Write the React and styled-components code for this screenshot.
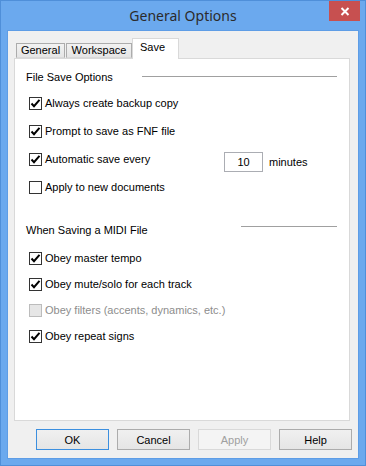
import React from "react";
import styled, { createGlobalStyle } from "styled-components";

const Global = createGlobalStyle`
  html, body { margin: 0; padding: 0; background: #6ba9ee; }
  * { box-sizing: border-box; }
`;

const Window = styled.div`
  width: 366px;
  height: 466px;
  background: #6ba9ee;
  border: 1px solid #4f8fd9;
  display: flex;
  flex-direction: column;
  font-family: "Liberation Sans", Arial, sans-serif;
  font-size: 11px;
  color: #000;
`;

const TitleBar = styled.div`
  height: 30px;
  display: grid;
  grid-template-columns: 1fr auto 1fr;
  align-items: start;
`;

const Title = styled.div`
  grid-column: 2;
  font-family: "Noto Sans", "Open Sans", sans-serif;
  font-size: 14px;
  line-height: 29px;
  color: #2b2b2b;
`;

const CloseButton = styled.div`
  grid-column: 3;
  justify-self: end;
  margin-right: 5px;
  width: 31px;
  height: 20px;
  background: #c75050;
  display: flex;
  align-items: center;
  justify-content: center;
`;

const Client = styled.div`
  flex: 1;
  margin: 0 7px 7px 7px;
  background: #f0f0f0;
  box-shadow: 0 0 0 1px #5e9de6;
  display: flex;
  flex-direction: column;
  padding: 7px 8px 8px 6px;
`;

const TabStrip = styled.div`
  height: 20px;
  display: flex;
  align-items: flex-end;
  padding-left: 2px;
  position: relative;
  z-index: 1;
`;

const Tab = styled.div`
  height: ${(p) => (p.$active ? "21px" : "15px")};
  margin: ${(p) => (p.$active ? "0 -2px -1px -1px" : "0 1px 0 0")};
  padding: ${(p) => (p.$active ? "0 8px 4px 7px" : "0 5px")};
  width: ${(p) => p.$w}px;
  border: 1px solid ${(p) => (p.$active ? "#d9d9d9" : "#acacac")};
  border-bottom: ${(p) => (p.$active ? "none" : "1px solid #d9d9d9")};
  background: ${(p) => (p.$active ? "#fff" : "linear-gradient(#f2f2f2, #e5e5e5)")};
  display: flex;
  align-items: center;
  justify-content: ${(p) => (p.$active ? "flex-start" : "center")};
  font-size: 11px;
  line-height: 13px;
`;

const Panel = styled.div`
  height: 363px;
  background: #fff;
  border: 1px solid #d9d9d9;
  padding: 10px 12px 0 0;
  display: flex;
  flex-direction: column;
`;

const SectionHeader = styled.div`
  height: 16px;
  display: flex;
  align-items: center;
  padding-left: 11px;
  margin: ${(p) => p.$m};
`;

const Rule = styled.div`
  margin-left: auto;
  width: ${(p) => p.$w}px;
  height: 1px;
  background: #a0a0a0;
  align-self: flex-start;
  margin-top: ${(p) => p.$t}px;
`;

const Row = styled.div`
  height: ${(p) => p.$h}px;
  display: flex;
  align-items: center;
  padding-left: 14px;
`;

const CheckLabel = styled.label`
  display: flex;
  align-items: center;
  gap: 3px;
  width: ${(p) => (p.$w ? `${p.$w}px` : "auto")};
  color: ${(p) => (p.$disabled ? "#8d8d8d" : "#000")};
`;

const Box = styled.span`
  width: 13px;
  height: 13px;
  border: 1px solid ${(p) => (p.$disabled ? "#bcbcbc" : "#333")};
  background: ${(p) => (p.$disabled ? "#e6e6e6" : "#fff")};
  display: flex;
  align-items: center;
  justify-content: center;
`;

const NumberBox = styled.div`
  width: 39px;
  height: 20px;
  margin-top: 6px;
  border: 1px solid #abadb3;
  background: #fff;
  display: flex;
  align-items: center;
  justify-content: center;
  font-size: 11px;
`;

const Unit = styled.span`
  margin: 6px 0 0 6px;
`;

const ButtonRow = styled.div`
  margin-top: 8px;
  display: flex;
  justify-content: flex-end;
  gap: 8px;
  margin-right: -2px;
`;

const Button = styled.div`
  width: 73px;
  height: 21px;
  border: 1px solid ${(p) => (p.$default ? "#3c8fdf" : p.$disabled ? "#d9d9d9" : "#acacac")};
  background: ${(p) => (p.$disabled ? "#f4f4f4" : "linear-gradient(#f0f0f0, #e5e5e5)")};
  color: ${(p) => (p.$disabled ? "#a0a0a0" : "#000")};
  display: flex;
  align-items: center;
  justify-content: center;
  font-size: 11px;
`;

function Check({ checked, disabled, children, w }) {
  return (
    <CheckLabel $disabled={disabled} $w={w}>
      <Box $disabled={disabled}>
        {checked && (
          <svg width="11" height="11" viewBox="0 0 11 11">
            <polyline points="1.5,5.5 4,8.2 9.5,1.8" fill="none" stroke="#000" strokeWidth="2" />
          </svg>
        )}
      </Box>
      {children}
    </CheckLabel>
  );
}

export default function App() {
  return (
    <>
      <Global />
      <Window>
        <TitleBar>
          <Title>General Options</Title>
          <CloseButton>
            <svg width="10" height="9" viewBox="0 0 10 9">
              <path d="M1.5 1 L8.5 8 M8.5 1 L1.5 8" stroke="#fff" strokeWidth="2" />
            </svg>
          </CloseButton>
        </TitleBar>
        <Client>
          <TabStrip>
            <Tab $w={49}>General</Tab>
            <Tab $w={66}>Workspace</Tab>
            <Tab $w={47} $active>Save</Tab>
          </TabStrip>
          <Panel>
            <SectionHeader $m="0 0 4px 0">
              File Save Options
              <Rule $w={195} $t={7} />
            </SectionHeader>
            <Row $h={28}><Check checked>Always create backup copy</Check></Row>
            <Row $h={28}><Check checked>Prompt to save as FNF file</Check></Row>
            <Row $h={28}>
              <Check checked w={195}>Automatic save every</Check>
              <NumberBox>10</NumberBox>
              <Unit>minutes</Unit>
            </Row>
            <Row $h={28}><Check>Apply to new documents</Check></Row>
            <SectionHeader $m="21px 0 7px 0">
              When Saving a MIDI File
              <Rule $w={96} $t={4} />
            </SectionHeader>
            <Row $h={26}><Check checked>Obey master tempo</Check></Row>
            <Row $h={26}><Check checked>Obey mute/solo for each track</Check></Row>
            <Row $h={26}><Check disabled>Obey filters (accents, dynamics, etc.)</Check></Row>
            <Row $h={26}><Check checked>Obey repeat signs</Check></Row>
          </Panel>
          <ButtonRow>
            <Button $default>OK</Button>
            <Button>Cancel</Button>
            <Button $disabled>Apply</Button>
            <Button>Help</Button>
          </ButtonRow>
        </Client>
      </Window>
    </>
  );
}
